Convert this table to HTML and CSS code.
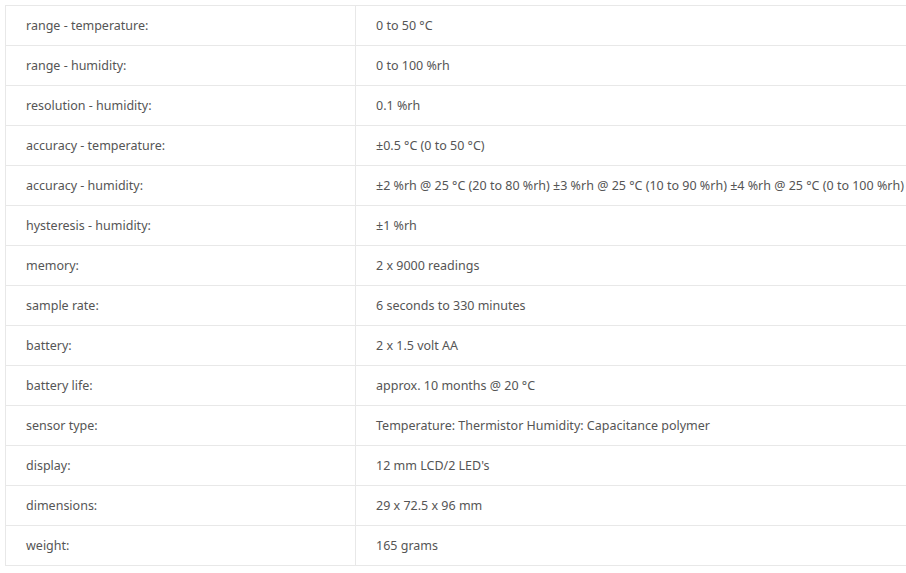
FILE: index.html
```html
<!DOCTYPE html>
<html>
<head>
<meta charset="utf-8">
<link rel="stylesheet" href="styles.css">
</head>
<body>
<table class="specs">
<tbody>
<tr><td class="k">range - temperature:</td><td class="v">0 to 50 °C</td></tr>
<tr><td class="k">range - humidity:</td><td class="v">0 to 100 %rh</td></tr>
<tr><td class="k">resolution - humidity:</td><td class="v">0.1 %rh</td></tr>
<tr><td class="k">accuracy - temperature:</td><td class="v">±0.5 °C (0 to 50 °C)</td></tr>
<tr><td class="k">accuracy - humidity:</td><td class="v">±2 %rh @ 25 °C (20 to 80 %rh) ±3 %rh @ 25 °C (10 to 90 %rh) ±4 %rh @ 25 °C (0 to 100 %rh)</td></tr>
<tr><td class="k">hysteresis - humidity:</td><td class="v">±1 %rh</td></tr>
<tr><td class="k">memory:</td><td class="v">2 x 9000 readings</td></tr>
<tr><td class="k">sample rate:</td><td class="v">6 seconds to 330 minutes</td></tr>
<tr><td class="k">battery:</td><td class="v">2 x 1.5 volt AA</td></tr>
<tr><td class="k">battery life:</td><td class="v">approx. 10 months @ 20 °C</td></tr>
<tr><td class="k">sensor type:</td><td class="v">Temperature: Thermistor Humidity: Capacitance polymer</td></tr>
<tr><td class="k">display:</td><td class="v">12 mm LCD/2 LED's</td></tr>
<tr><td class="k">dimensions:</td><td class="v">29 x 72.5 x 96 mm</td></tr>
<tr><td class="k">weight:</td><td class="v">165 grams</td></tr>
</tbody>
</table>
</body>
</html>
```
FILE: styles.css
```css
html, body {
  margin: 0;
  padding: 0;
  background: #fff;
  overflow: hidden;
}
body {
  padding: 5px 0 0 5px;
  font-family: "Noto Sans", "Open Sans", sans-serif;
  font-size: 12.5px;
  color: #555;
}
.specs {
  border-collapse: collapse;
  width: 940px;
}
.specs td {
  border: 1px solid #e8e8e8;
  height: 40px;
  padding: 0 20px;
  box-sizing: border-box;
  white-space: nowrap;
  vertical-align: middle;
}
.specs td.k {
  width: 350px;
}
```
